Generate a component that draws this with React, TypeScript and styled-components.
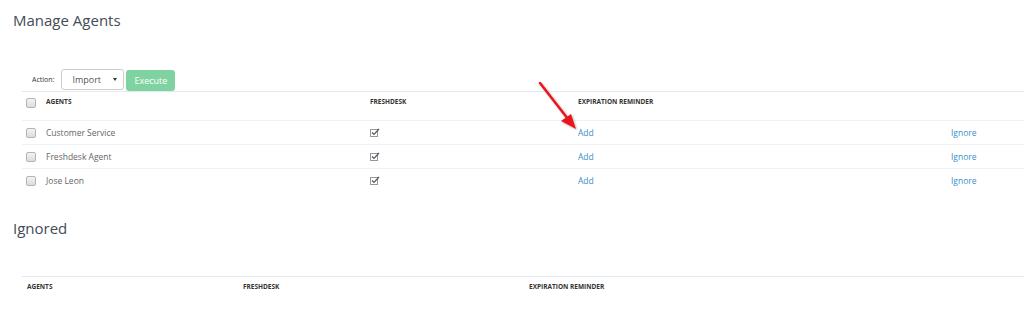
import React, { FC } from "react";
import styled, { createGlobalStyle } from "styled-components";

const GlobalStyle = createGlobalStyle`
  html, body {
    margin: 0;
    padding: 0;
    background: #fff;
    font-family: "Open Sans", "Liberation Sans", sans-serif;
    overflow: hidden;
  }
`;

const Page = styled.div`
  position: relative;
  width: 1024px;
  height: 328px;
  padding: 9px 0 0 13px;
  box-sizing: border-box;
`;

const Heading = styled.h2`
  margin: 0;
  font-size: 15px;
  font-weight: 400;
  line-height: 22px;
  color: #444c55;
`;

const Section = styled.div<{ $top: number }>`
  margin-top: ${(p) => p.$top}px;
  padding-left: 9px;
`;

const ActionBar = styled.div`
  display: flex;
  align-items: center;
  gap: 2px;
  height: 23px;
  padding-left: 10px;
`;

const ActionLabel = styled.span`
  font-size: 7px;
  color: #333;
  margin-right: 5px;
`;

const SelectBox = styled.div`
  position: relative;
  display: flex;
  align-items: center;
  box-sizing: border-box;
  width: 63px;
  height: 21px;
  padding-left: 10px;
  border: 1px solid #ccc;
  border-radius: 3px;
  font-size: 9px;
  color: #555;
  &::after {
    content: "";
    position: absolute;
    right: 6px;
    top: 8px;
    border-left: 2px solid transparent;
    border-right: 2px solid transparent;
    border-top: 3px solid #333;
  }
`;

const ExecuteButton = styled.button`
  box-sizing: border-box;
  height: 21px;
  width: 49px;
  margin-top: 2px;
  border: none;
  border-radius: 3px;
  background: #7fd3a0;
  color: #fff;
  font-family: inherit;
  font-size: 9px;
  padding: 0;
`;

const Row = styled.div<{ $cols: string; $height: number; $head?: boolean }>`
  display: grid;
  grid-template-columns: ${(p) => p.$cols};
  align-items: ${(p) => (p.$head ? "start" : "center")};
  height: ${(p) => p.$height}px;
  box-sizing: border-box;
  border-top: 1px solid ${(p) => (p.$head ? "#e3e9f0" : "#eef1f5")};
  padding-top: ${(p) => (p.$head ? "5px" : "0")};
  font-size: 8.5px;
`;

const HeadCell = styled.div`
  font-size: 6.5px;
  font-weight: 700;
  color: #333;
  text-transform: uppercase;
  line-height: 10px;
`;

const Cell = styled.div`
  font-size: 8.5px;
  color: #666;
  line-height: 12px;
`;

const Link = styled.a`
  display: block;
  font-size: 8.5px;
  color: #3a8fcc;
  text-decoration: none;
  line-height: 12px;
`;

const Box = styled.span`
  display: block;
  width: 8px;
  height: 8px;
  margin-left: 4px;
  border: 1px solid #b5b5b5;
  border-radius: 2px;
  background: linear-gradient(#f4f4f4, #dcdcdc);
`;

const IconCell = styled.div`
  display: flex;
  align-items: center;
  height: 12px;
`;

const Arrow = styled.svg`
  position: absolute;
  left: 534px;
  top: 79px;
`;

const CheckIcon: FC = () => (
  <svg width="10" height="9" viewBox="0 0 10 9">
    <rect x="0.5" y="1.5" width="7" height="7" fill="none" stroke="#999" strokeWidth="1" />
    <path d="M2 4.5 L4 6.5 L9 1" fill="none" stroke="#556" strokeWidth="1.2" />
  </svg>
);

const agents = ["Customer Service", "Freshdesk Agent", "Jose Leon"];
const mainCols = "24px 324px 208px 373px 1fr";
const ignoredCols = "216px 286px 1fr";

const App: FC = () => (
  <Page>
    <GlobalStyle />
    <Heading>Manage Agents</Heading>
    <Section $top={37}>
      <ActionBar>
        <ActionLabel>Action:</ActionLabel>
        <SelectBox>Import</SelectBox>
        <ExecuteButton>Execute</ExecuteButton>
      </ActionBar>
      <Row $cols={mainCols} $height={29} $head>
        <Box style={{ marginTop: 1 }} />
        <HeadCell>Agents</HeadCell>
        <HeadCell>Freshdesk</HeadCell>
        <HeadCell>Expiration Reminder</HeadCell>
        <div />
      </Row>
      {agents.map((name) => (
        <Row key={name} $cols={mainCols} $height={24}>
          <Box />
          <Cell>{name}</Cell>
          <IconCell>
            <CheckIcon />
          </IconCell>
          <Link href="#">Add</Link>
          <Link href="#">Ignore</Link>
        </Row>
      ))}
    </Section>
    <Heading style={{ marginTop: 25 }}>Ignored</Heading>
    <Section $top={37}>
      <Row $cols={ignoredCols} $height={29} $head style={{ paddingLeft: 5 }}>
        <HeadCell>Agents</HeadCell>
        <HeadCell>Freshdesk</HeadCell>
        <HeadCell>Expiration Reminder</HeadCell>
      </Row>
    </Section>
    <Arrow width="44" height="54" viewBox="0 0 44 54">
      <defs>
        <filter id="sh" x="-30%" y="-30%" width="160%" height="160%">
          <feDropShadow dx="1" dy="1" stdDeviation="1" floodColor="#000" floodOpacity="0.3" />
        </filter>
      </defs>
      <g filter="url(#sh)">
        <line x1="6" y1="4" x2="34" y2="40" stroke="#e8171b" strokeWidth="2.5" strokeLinecap="round" />
        <polygon points="42,50 27,42 37,35" fill="#e8171b" />
      </g>
    </Arrow>
  </Page>
);

export default App;
